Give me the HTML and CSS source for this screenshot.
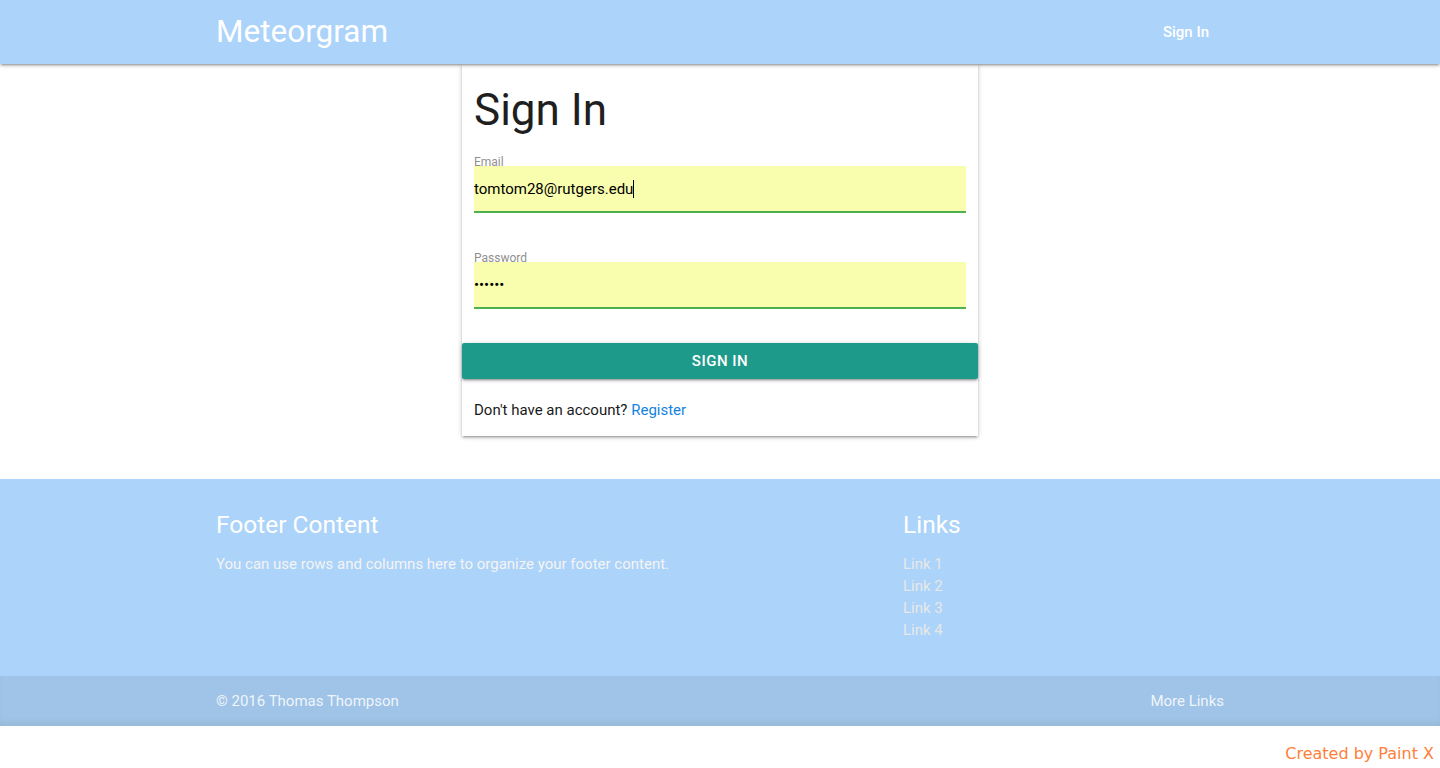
FILE: index.html
```html
<!DOCTYPE html>
<html lang="en">
<head>
<meta charset="utf-8">
<title>Meteorgram - Sign In</title>
<link rel="stylesheet" href="styles.css">
</head>
<body>
<header class="nav">
  <div class="container nav-inner">
    <a class="brand" href="#">Meteorgram</a>
    <a class="nav-link" href="#">Sign In</a>
  </div>
</header>
<main class="main">
  <div class="card">
    <div class="card-content">
      <h2 class="title">Sign In</h2>
      <div class="field">
        <label class="field-label" for="email">Email</label>
        <div class="input-wrap">
          <input class="field-input" id="email" type="email" value="tomtom28@rutgers.edu">
          <span class="caret"></span>
        </div>
      </div>
      <div class="field field-second">
        <label class="field-label" for="password">Password</label>
        <input class="field-input" id="password" type="password" value="secret">
      </div>
    </div>
    <button class="btn" type="button">Sign In</button>
    <p class="card-foot">Don't have an account? <a class="register" href="#">Register</a></p>
  </div>
</main>
<footer class="footer">
  <div class="container footer-row">
    <div class="footer-col">
      <h5 class="footer-title">Footer Content</h5>
      <p class="footer-text">You can use rows and columns here to organize your footer content.</p>
    </div>
    <div class="footer-col">
      <h5 class="footer-title">Links</h5>
      <ul class="footer-links">
        <li><a href="#">Link 1</a></li>
        <li><a href="#">Link 2</a></li>
        <li><a href="#">Link 3</a></li>
        <li><a href="#">Link 4</a></li>
      </ul>
    </div>
  </div>
  <div class="copyright">
    <div class="container copyright-inner">
      <span>© 2016 Thomas Thompson</span>
      <a href="#">More Links</a>
    </div>
  </div>
</footer>
<div class="credit">Created by Paint X</div>
</body>
</html>
```
FILE: styles.css
```css
* { box-sizing: border-box; }

html, body {
  margin: 0;
  padding: 0;
}

body {
  font-family: Roboto, "Liberation Sans", sans-serif;
  font-size: 15px;
  color: rgba(0, 0, 0, 0.87);
  background: #ffffff;
}

a { text-decoration: none; }

.container {
  width: 1008px;
  margin: 0 auto;
}

/* NAV */
.nav {
  position: relative;
  z-index: 2;
  height: 64px;
  background: #acd3f9;
  box-shadow: 0 2px 2px 0 rgba(0,0,0,0.14), 0 3px 1px -2px rgba(0,0,0,0.12), 0 1px 5px 0 rgba(0,0,0,0.2);
}

.nav-inner {
  display: flex;
  justify-content: space-between;
  align-items: center;
  height: 64px;
}

.brand {
  color: #ffffff;
  font-size: 31.5px;
  line-height: 64px;
}

.nav-link {
  color: #ffffff;
  font-size: 15px;
  font-weight: 500;
  line-height: 64px;
  padding: 0 15px;
}

/* MAIN */
.main {
  padding-bottom: 43px;
}

.card {
  position: relative;
  z-index: 1;
  width: 516px;
  margin: 0 auto;
  background: #ffffff;
  box-shadow: 0 2px 2px 0 rgba(0,0,0,0.14), 0 3px 1px -2px rgba(0,0,0,0.12), 0 1px 5px 0 rgba(0,0,0,0.2);
}

.card-content {
  padding: 21px 12px 0;
}

.title {
  margin: 0;
  font-size: 44px;
  line-height: 50px;
  font-weight: 400;
  color: #1f1f1f;
}

.field {
  margin-top: 21px;
}

.field-second {
  margin-top: 39px;
}

.field-label {
  position: relative;
  z-index: 1;
  display: block;
  font-size: 12px;
  line-height: 12px;
  color: #8f8f8f;
  margin-bottom: -2px;
}

.input-wrap {
  position: relative;
}

.field-input {
  display: block;
  width: 100%;
  height: 47px;
  margin: 0;
  padding: 0;
  border: none;
  border-bottom: 2px solid #4caf50;
  background: #f9fdae;
  font-family: Roboto, "Liberation Sans", sans-serif;
  font-size: 15px;
  color: #000000;
  outline: none;
}

.caret {
  position: absolute;
  left: 159px;
  top: 14px;
  width: 1px;
  height: 18px;
  background: #000000;
}

.btn {
  display: block;
  width: 100%;
  height: 36px;
  margin-top: 34px;
  border: none;
  border-radius: 2px;
  background: #1d9a8a;
  color: #ffffff;
  font-family: Roboto, "Liberation Sans", sans-serif;
  font-size: 15px;
  font-weight: 500;
  letter-spacing: 0.5px;
  text-transform: uppercase;
  box-shadow: 0 2px 2px 0 rgba(0,0,0,0.14), 0 3px 1px -2px rgba(0,0,0,0.12), 0 1px 5px 0 rgba(0,0,0,0.2);
  cursor: pointer;
}

.card-foot {
  margin: 0;
  padding: 19px 12px 14px;
  font-size: 15px;
  line-height: 24px;
  color: #1a1a1a;
}

.register {
  color: #1383e1;
}

/* FOOTER */
.footer {
  background: #acd3f9;
  padding-top: 20px;
}

.footer-row {
  display: grid;
  grid-template-columns: 687px 1fr;
  padding-bottom: 35.5px;
}

.footer-title {
  margin: 11.5px 0 0;
  font-size: 24.5px;
  line-height: 27px;
  font-weight: 400;
  color: #ffffff;
}

.footer-text {
  margin: 15px 0 0;
  line-height: 22px;
  color: #f4f4f4;
}

.footer-links {
  list-style: none;
  margin: 15px 0 0;
  padding: 0;
  line-height: 22px;
}

.footer-links a {
  color: #e8e8e8;
}

.copyright {
  height: 50px;
  line-height: 50px;
  background: #a0c4e7;
  color: rgba(255, 255, 255, 0.85);
  box-shadow: inset 0 -6px 8px -4px rgba(0, 0, 0, 0.08);
}

.copyright-inner {
  display: flex;
  justify-content: space-between;
}

.copyright a {
  color: rgba(255, 255, 255, 0.85);
}

.credit {
  margin-top: 18px;
  padding-right: 6px;
  text-align: right;
  font-family: "DejaVu Sans", sans-serif;
  font-size: 16px;
  line-height: 19px;
  color: #ff7f3a;
}
```
